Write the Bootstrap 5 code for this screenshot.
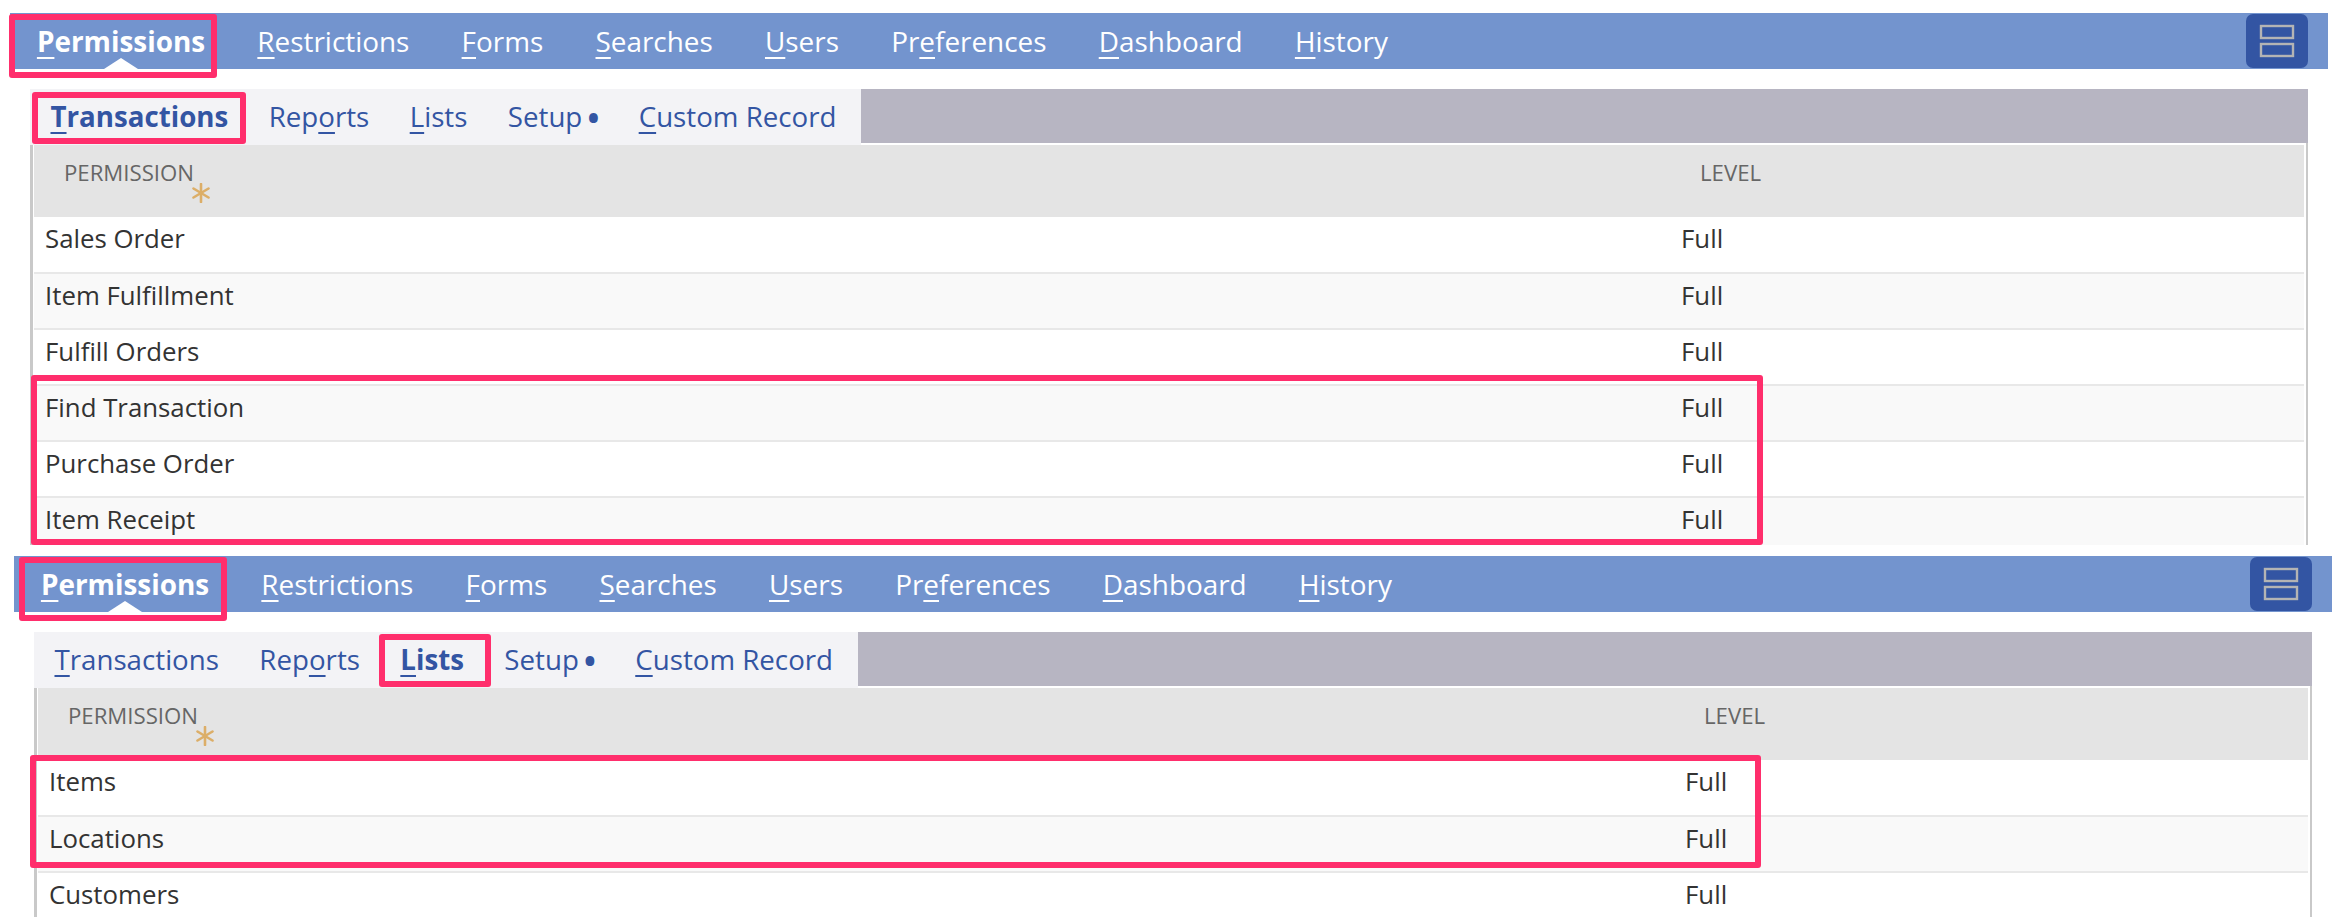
<!DOCTYPE html>
<html lang="en">
<head>
<meta charset="utf-8">
<title>Permissions</title>
<link href="https://cdn.jsdelivr.net/npm/bootstrap@5.3.0/dist/css/bootstrap.min.css" rel="stylesheet">
<style>
html, body { background: #fff; }
body { font-family: "Open Sans", sans-serif; color: #333; margin: 0; overflow: hidden; }
u { text-decoration-thickness: 2px; text-underline-offset: 5px; text-decoration-skip-ink: none; }

.shot { position: relative; }
.shot-one { margin: 13px 8px 0 10px; height: 532px; }
.shot-two { margin: 11px 4px 0 14px; height: 363px; }

.main-bar { height: 56px; background: #7394ce; padding-right: 20px; }
.main-item { position: relative; display: block; height: 56px; line-height: 30px; padding: 13px 26.1px 0; color: #fff; font-size: 27.9px; text-decoration: none; white-space: nowrap; }
.main-item.is-on { font-weight: 700; margin-left: .8px; }
.main-item.is-on::after { content: ""; position: absolute; left: 50%; bottom: 0; margin-left: -17px; border: solid transparent; border-width: 0 17px 11px; border-bottom-color: #fff; }
.layout-btn { width: 62px; height: 54px; background: #3355a3; border: 0; border-radius: 7px; margin-top: 1px; padding: 0; }
.layout-btn svg { display: block; margin: 0 auto; }

.sub-area { margin: 20px 20px 0; }
.sub-bar { height: 54px; background: #b7b5c2; }
.sub-tabs { height: 56px; background: #f3f3f6; flex: 0 0 831px; }
.shot-two .sub-tabs { flex-basis: 824px; }
.sub-item { position: relative; display: block; height: 56px; line-height: 30px; padding: 12px 20.2px 0; color: #3355a3; font-size: 27.7px; text-decoration: none; white-space: nowrap; }
.sub-item:first-child { margin-left: .3px; }
.sub-item.is-on { font-weight: 700; }
.sub-item.is-on::after { content: ""; position: absolute; left: 50%; bottom: 2px; margin-left: -10px; border: solid transparent; border-width: 0 10px 4px; border-bottom-color: #fff; }
.new-dot { font-size: 42px; line-height: 0; vertical-align: -6px; margin: 0 -3px 0 -4px; }

.grid-clip { overflow: hidden; border-left: 3px solid #c9c9c9; border-right: 2px solid #c9c9c9; background: #fff; padding: 2px 2px 0 1px; }
.shot-one .grid-clip { height: 402px; }
.shot-two .grid-clip { height: 231px; }
.perm-table { table-layout: fixed; width: 100%; margin: 0; }
.perm-table > :not(caption) > * > * { padding: 0 0 0 11px; border-width: 0; height: 56px; vertical-align: top; box-shadow: none; background: transparent; color: #333; }
.perm-table thead th { background: #e4e4e4; color: #666; font-weight: 400; font-size: 22.2px; height: 72px; padding: 14px 0 0 30px; line-height: 28px; }
.perm-table thead th.lvl { padding-left: 30px; }
.perm-table tbody td { font-size: 25.8px; line-height: 32px; padding-top: 5px; border-bottom: 2px solid #e8e8e8; background: #fff; }
.perm-table tbody tr.alt td { background: #f9f9f9; }
.col-name { width: 1636px; }
.req-star { display: block; margin: -4px 0 0 128px; }

.mark-box { position: absolute; border: 6px solid #ff2e6c; border-radius: 3px; pointer-events: none; }
.m1a { left: -1px; top: 1px; width: 208px; height: 64px; }
.m1b { left: 22px; top: 79px; width: 214px; height: 52px; }
.m1c { left: 21px; top: 362px; width: 1732px; height: 170px; }
.m2a { left: 5px; top: 1px; width: 208px; height: 64px; }
.m2b { left: 365px; top: 78px; width: 112px; height: 53px; }
.m2c { left: 16px; top: 199px; width: 1731px; height: 113px; }
</style>
</head>
<body>

<section class="shot shot-one">
  <nav class="main-bar d-flex justify-content-between">
    <div class="d-flex">
      <a class="main-item is-on" href="#"><u>P</u>ermissions</a>
      <a class="main-item" href="#"><u>R</u>estrictions</a>
      <a class="main-item" href="#"><u>F</u>orms</a>
      <a class="main-item" href="#"><u>S</u>earches</a>
      <a class="main-item" href="#"><u>U</u>sers</a>
      <a class="main-item" href="#">Pr<u>e</u>ferences</a>
      <a class="main-item" href="#"><u>D</u>ashboard</a>
      <a class="main-item" href="#"><u>H</u>istory</a>
    </div>
    <button class="layout-btn" type="button" aria-label="Layout">
      <svg width="36" height="34" viewBox="0 0 36 34"><rect x="2" y="2" width="32" height="12" fill="none" stroke="#b4b4b4" stroke-width="2.4"/><rect x="2" y="20" width="32" height="12" fill="none" stroke="#b4b4b4" stroke-width="2.4"/></svg>
    </button>
  </nav>
  <div class="sub-area">
    <div class="sub-bar d-flex">
      <div class="sub-tabs d-flex">
        <a class="sub-item is-on" href="#"><u>T</u>ransactions</a>
        <a class="sub-item" href="#">Rep<u>o</u>rts</a>
        <a class="sub-item" href="#"><u>L</u>ists</a>
        <a class="sub-item" href="#">Setup <span class="new-dot">•</span></a>
        <a class="sub-item" href="#"><u>C</u>ustom Record</a>
      </div>
    </div>
    <div class="grid-clip">
      <table class="table perm-table">
        <colgroup><col class="col-name"><col></colgroup>
        <thead>
          <tr>
            <th>PERMISSION<svg class="req-star" width="18" height="20" viewBox="0 0 18 20"><g stroke="#dcae68" stroke-width="2.6" stroke-linecap="round"><path d="M9 1V19"/><path d="M1.5 5.5L16.5 14.5"/><path d="M16.5 5.5L1.5 14.5"/></g></svg></th>
            <th class="lvl">LEVEL</th>
          </tr>
        </thead>
        <tbody>
          <tr><td>Sales Order</td><td>Full</td></tr>
          <tr class="alt"><td>Item Fulfillment</td><td>Full</td></tr>
          <tr><td>Fulfill Orders</td><td>Full</td></tr>
          <tr class="alt"><td>Find Transaction</td><td>Full</td></tr>
          <tr><td>Purchase Order</td><td>Full</td></tr>
          <tr class="alt"><td>Item Receipt</td><td>Full</td></tr>
        </tbody>
      </table>
    </div>
  </div>
  <div class="mark-box m1a"></div>
  <div class="mark-box m1b"></div>
  <div class="mark-box m1c"></div>
</section>

<section class="shot shot-two">
  <nav class="main-bar d-flex justify-content-between">
    <div class="d-flex">
      <a class="main-item is-on" href="#"><u>P</u>ermissions</a>
      <a class="main-item" href="#"><u>R</u>estrictions</a>
      <a class="main-item" href="#"><u>F</u>orms</a>
      <a class="main-item" href="#"><u>S</u>earches</a>
      <a class="main-item" href="#"><u>U</u>sers</a>
      <a class="main-item" href="#">Pr<u>e</u>ferences</a>
      <a class="main-item" href="#"><u>D</u>ashboard</a>
      <a class="main-item" href="#"><u>H</u>istory</a>
    </div>
    <button class="layout-btn" type="button" aria-label="Layout">
      <svg width="36" height="34" viewBox="0 0 36 34"><rect x="2" y="2" width="32" height="12" fill="none" stroke="#b4b4b4" stroke-width="2.4"/><rect x="2" y="20" width="32" height="12" fill="none" stroke="#b4b4b4" stroke-width="2.4"/></svg>
    </button>
  </nav>
  <div class="sub-area">
    <div class="sub-bar d-flex">
      <div class="sub-tabs d-flex">
        <a class="sub-item" href="#"><u>T</u>ransactions</a>
        <a class="sub-item" href="#">Rep<u>o</u>rts</a>
        <a class="sub-item is-on" href="#"><u>L</u>ists</a>
        <a class="sub-item" href="#">Setup <span class="new-dot">•</span></a>
        <a class="sub-item" href="#"><u>C</u>ustom Record</a>
      </div>
    </div>
    <div class="grid-clip">
      <table class="table perm-table">
        <colgroup><col class="col-name"><col></colgroup>
        <thead>
          <tr>
            <th>PERMISSION<svg class="req-star" width="18" height="20" viewBox="0 0 18 20"><g stroke="#dcae68" stroke-width="2.6" stroke-linecap="round"><path d="M9 1V19"/><path d="M1.5 5.5L16.5 14.5"/><path d="M16.5 5.5L1.5 14.5"/></g></svg></th>
            <th class="lvl">LEVEL</th>
          </tr>
        </thead>
        <tbody>
          <tr><td>Items</td><td>Full</td></tr>
          <tr class="alt"><td>Locations</td><td>Full</td></tr>
          <tr><td>Customers</td><td>Full</td></tr>
        </tbody>
      </table>
    </div>
  </div>
  <div class="mark-box m2a"></div>
  <div class="mark-box m2b"></div>
  <div class="mark-box m2c"></div>
</section>

<script src="https://cdn.jsdelivr.net/npm/bootstrap@5.3.0/dist/js/bootstrap.bundle.min.js"></script>
</body>
</html>
